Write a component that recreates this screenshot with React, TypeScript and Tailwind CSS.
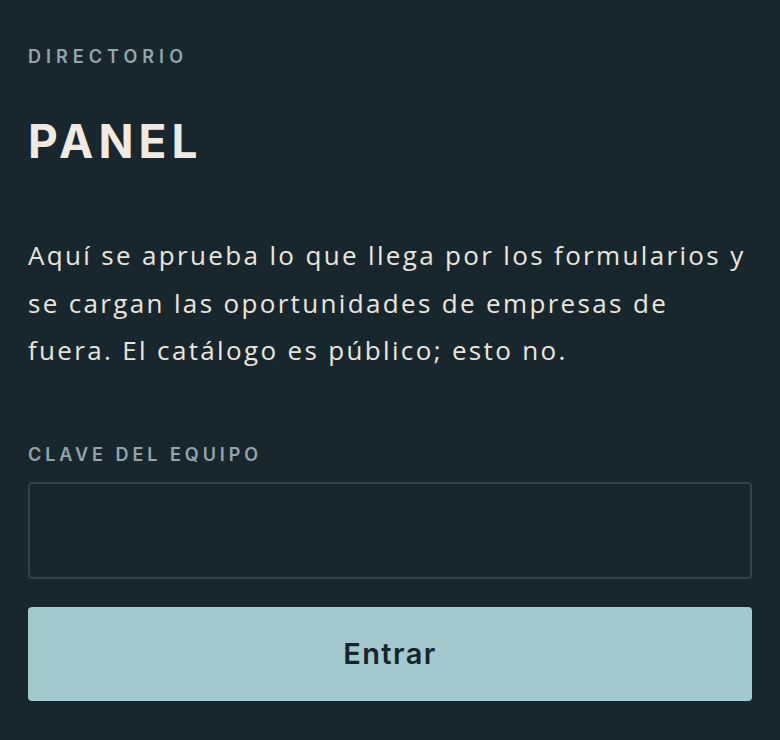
import React from 'react'

export default function App() {
    return (
        <div className="min-h-[740px] w-full bg-[#18262e] px-[28px] pt-[44px] font-['Inter',sans-serif]">
            <p className="text-[18px] font-semibold uppercase leading-[26px] tracking-[0.28em] text-[#93a6ae]">Directorio</p>
            <h1 className="mt-[43px] text-[46px] font-bold leading-[56px] tracking-[0.11em] text-[#efebe2]">PANEL</h1>
            <p className="mt-[63px] font-['Open_Sans',sans-serif] text-[26px] leading-[47.5px] tracking-[0.09em] text-[#e9e6de]">
                Aquí se aprueba lo que llega por los formularios y se cargan las oportunidades de empresas de fuera. El catálogo es público; esto no.
            </p>

            {/* Login form */}
            <label className="mt-[67px] block text-[18px] font-semibold uppercase leading-[26px] tracking-[0.22em] text-[#93a6ae]">
                Clave del equipo
            </label>
            <input
                type="password"
                className="mt-[14px] block h-[97px] w-full rounded-[4px] border-2 border-[#2d4649] bg-transparent px-4 text-[26px] text-[#e9e6de] outline-none"
            />
            <button className="mt-[28px] block h-[94px] w-full rounded-[4px] bg-[#a3c9cd] text-[29px] font-semibold tracking-[0.05em] text-[#16262e]">
                Entrar
            </button>
        </div>
    )
}
